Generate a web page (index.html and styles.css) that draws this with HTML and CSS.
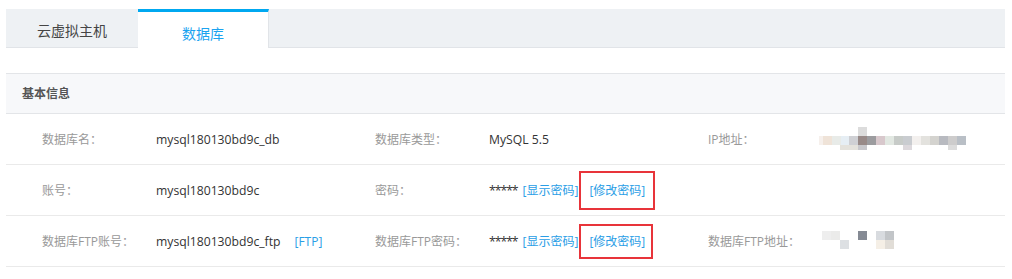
FILE: index.html
```html
<!DOCTYPE html>
<html lang="zh-CN">
<head>
  <meta charset="UTF-8">
  <title>数据库</title>
  <link rel="stylesheet" href="styles.css">
</head>
<body>
  <div class="page">
    <div class="tabs">
      <div class="tab">云虚拟主机</div>
      <div class="tab active">数据库</div>
    </div>

    <div class="panel">
      <div class="panel-head">基本信息</div>

      <div class="row">
        <div class="cell"><span class="label">数据库名：</span><span class="value">mysql180130bd9c_db</span></div>
        <div class="cell"><span class="label">数据库类型：</span><span class="value">MySQL 5.5</span></div>
        <div class="cell"><span class="label">IP地址：</span>
          <svg class="mosaic" width="150" height="24" viewBox="0 0 150 24">
            <rect x="0" y="9" width="4" height="9" fill="#f6f0ec"/>
            <rect x="4" y="9" width="9" height="9" fill="#efe3d8"/>
            <rect x="13" y="9" width="9" height="9" fill="#e8ebe8"/>
            <rect x="22" y="9" width="8" height="9" fill="#e6eef4"/>
            <rect x="30" y="9" width="9" height="9" fill="#cfd0d4"/>
            <rect x="39" y="9" width="9" height="9" fill="#988a88"/>
            <rect x="39" y="0" width="9" height="9" fill="#dcdcdc"/>
            <rect x="39" y="18" width="9" height="5" fill="#c8c8cc"/>
            <rect x="21" y="18" width="18" height="5" fill="#e4e2dc"/>
            <rect x="48" y="9" width="9" height="9" fill="#9c9c9f"/>
            <rect x="57" y="9" width="9" height="9" fill="#d8c8cc"/>
            <rect x="66" y="9" width="9" height="9" fill="#e2e8e2"/>
            <rect x="75" y="9" width="9" height="9" fill="#c7cbc8"/>
            <rect x="84" y="9" width="9" height="9" fill="#c9ccd0"/>
            <rect x="84" y="18" width="9" height="5" fill="#dcd8dc"/>
            <rect x="93" y="9" width="9" height="9" fill="#f3f0ee"/>
            <rect x="102" y="9" width="9" height="9" fill="#e3e2de"/>
            <rect x="111" y="9" width="9" height="9" fill="#d4d3cf"/>
            <rect x="120" y="9" width="9" height="9" fill="#b8bac0"/>
            <rect x="129" y="9" width="9" height="9" fill="#cdcccc"/>
            <rect x="129" y="18" width="9" height="5" fill="#dcdcdc"/>
            <rect x="138" y="9" width="9" height="9" fill="#b9bfc6"/>
          </svg>
        </div>
      </div>

      <div class="row">
        <div class="cell"><span class="label">账号：</span><span class="value">mysql180130bd9c</span></div>
        <div class="cell"><span class="label">密码：</span><span class="value"><span class="stars">*****</span><a class="link">[显示密码]</a><span class="mark"><a class="link">[修改密码]</a></span></span></div>
        <div class="cell"></div>
      </div>

      <div class="row">
        <div class="cell"><span class="label">数据库FTP账号：</span><span class="value">mysql180130bd9c_ftp<a class="link ftp">[FTP]</a></span></div>
        <div class="cell"><span class="label">数据库FTP密码：</span><span class="value"><span class="stars">*****</span><a class="link">[显示密码]</a><span class="mark small"><a class="link">[修改密码]</a></span></span></div>
        <div class="cell"><span class="label">数据库FTP地址：</span>
          <svg class="mosaic" width="80" height="20" viewBox="0 0 80 20">
            <rect x="3" y="0" width="9" height="9" fill="#eeeeee"/>
            <rect x="12" y="0" width="9" height="9" fill="#ebebea"/>
            <rect x="21" y="9" width="9" height="9" fill="#dde0e3"/>
            <rect x="39" y="0" width="9" height="9" fill="#858a94"/>
            <rect x="57" y="0" width="9" height="9" fill="#d8dbdf"/>
            <rect x="66" y="0" width="9" height="9" fill="#c2c5c8"/>
            <rect x="57" y="9" width="9" height="9" fill="#f5efe6"/>
            <rect x="66" y="9" width="9" height="9" fill="#e1ddd7"/>
          </svg>
        </div>
      </div>
    </div>
  </div>
</body>
</html>
```

FILE: styles.css
```css
body {
  margin: 0;
  background-color: #fff;
  font-family: "Segoe UI", "Open Sans", "Noto Sans CJK SC", sans-serif;
  color: #333;
}
.page {
  padding: 9px 7px 0 6px;
}
.tabs {
  display: flex;
  height: 38px;
  background-color: #eef1f4;
  border-bottom: 1px solid #e1e4e8;
}
.tab {
  width: 132px;
  height: 38px;
  display: flex;
  align-items: center;
  justify-content: center;
  font-size: 14px;
  color: #444;
  box-sizing: border-box;
  padding-top: 3px;
}
.tab.active {
  width: 131px;
  height: 39px;
  background-color: #fff;
  border-top: 3px solid #00a8f0;
  border-right: 1px solid #e1e4e8;
  color: #1ba3f0;
  padding-top: 6px;
}
.panel {
  margin-top: 25px;
}
.panel-head {
  height: 39px;
  line-height: 39px;
  padding-left: 16px;
  background-color: #f7f8fa;
  border-top: 1px solid #e3e5e8;
  border-bottom: 1px solid #e3e5e8;
  font-size: 12px;
  font-weight: bold;
  color: #555;
}
.row {
  display: grid;
  grid-template-columns: 333px 333px 1fr;
  height: 50px;
  border-bottom: 1px solid #eaeaea;
  font-size: 12px;
}
.cell {
  display: flex;
  align-items: center;
  padding-left: 36px;
}
.label {
  width: 114px;
  flex-shrink: 0;
  color: #999;
}
.value {
  display: flex;
  align-items: center;
  font-size: 12.2px;
  color: #333;
  white-space: nowrap;
}
.stars {
  flex-shrink: 0;
  margin-right: 5px;
  letter-spacing: -1px;
}
.link {
  color: #2a9ee6;
  font-size: 12px;
  cursor: pointer;
}
.ftp {
  margin-left: 14px;
}
.mark {
  display: inline-block;
  margin-left: 1px;
  padding: 8px 8px 9px 8px;
  border: 2px solid #e8343a;
}
.mark.small {
  padding: 6px 6px 7px 8px;
}
.cell:last-child .label {
  width: 111px;
}
.mosaic {
  display: block;
}
```
